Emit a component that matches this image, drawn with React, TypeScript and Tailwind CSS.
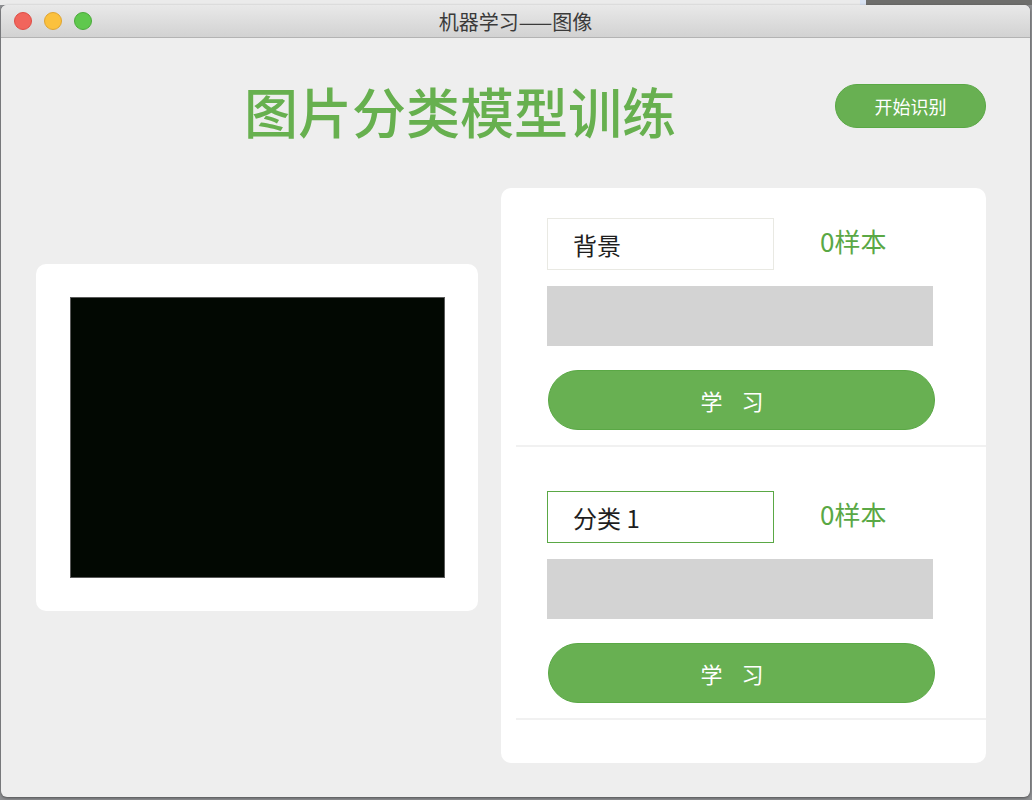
import React from 'react'

const cjk = { fontFamily: '"Noto Sans CJK SC", "Noto Sans", sans-serif' }

interface ClassRowProps {
  name: string
  count: number
  active?: boolean
  first?: boolean
}

const ClassRow: React.FC<ClassRowProps> = ({ name, count, active, first }) => {
  return (
    <div className="flex flex-col">
      <div className={`${first ? 'pt-[30px]' : 'pt-[44px]'} pl-[46px] pb-[15px] flex flex-col`}>
        {/* name + samples */}
        <div className="flex items-center h-[52px]">
          <input
            defaultValue={name}
            className={`w-[227px] h-[52px] pl-[25px] text-[24px] text-[#1e1e1e] bg-white outline-none border ${
              active ? 'border-[#5aa845]' : 'border-[#e9e9e3]'
            }`}
          />
          <span className="ml-[46px] text-[26px] text-[#5aa845] leading-none -mt-[6px]">{count}样本</span>
        </div>

        {/* sample strip */}
        <div className="mt-[16px] w-[386px] h-[60px] bg-[#d3d3d3]" />

        {/* learn button */}
        <button className="mt-[24px] ml-[1px] w-[387px] h-[60px] rounded-full bg-[#68b052] border border-[#5aa845] text-white text-[22px] tracking-[19px]">
          学习
        </button>
      </div>
      <div className="ml-[15px] h-[2px] bg-[#f1f1f1]" />
    </div>
  )
}

export default function App() {
  return (
    <div className="w-[1032px] h-[800px] flex flex-col bg-[#8e8f92] overflow-hidden" style={cjk}>
      {/* desktop strip behind the window */}
      <div className="h-[5px] flex">
        <div className="flex-1 bg-[#ebebeb]" />
        <div className="w-[6px] bg-[#d8e2f2]" />
        <div className="w-[166px] bg-[#6e6e6c]" />
      </div>

      {/* window */}
      <div className="mx-[1px] w-[1029px] h-[792px] flex flex-col rounded-[6px] overflow-hidden bg-[#eeeeee] shadow-[0_1px_3px_rgba(0,0,0,0.45)]">
        {/* title bar */}
        <div className="h-[33px] flex items-center bg-gradient-to-b from-[#e9e9e9] to-[#d2d2d2] border-b border-[#b3b3b3]">
          <div className="flex items-center gap-[12px] pl-[13px] w-[200px]">
            <span className="w-[18px] h-[18px] rounded-full bg-[#f1655c] border border-[#de4d45]" />
            <span className="w-[18px] h-[18px] rounded-full bg-[#fbc13d] border border-[#dfa431]" />
            <span className="w-[18px] h-[18px] rounded-full bg-[#5fc84d] border border-[#4aaa3a]" />
          </div>
          <div className="flex-1 text-center text-[20px] text-[#3a3a3a] -ml-[186px] mt-[1px]">机器学习——图像</div>
          <div className="w-[14px]" />
        </div>

        {/* content */}
        <div className="flex-1 flex flex-col">
          {/* header */}
          <div className="flex items-start h-[90px]">
            <h1 className="ml-[159px] w-[600px] mt-[46px] text-center text-[54px] leading-[54px] font-medium text-[#67b04f]">
              图片分类模型训练
            </h1>
            <button className="ml-[75px] mt-[46px] w-[151px] h-[44px] rounded-full bg-[#68b052] border border-[#5aa845] text-white text-[18px]">
              开始识别
            </button>
          </div>

          {/* main */}
          <div className="flex items-start mt-[60px]">
            {/* camera */}
            <div className="ml-[35px] mt-[76px] w-[442px] h-[347px] bg-white rounded-[10px] pl-[34px] pr-[33px] py-[33px]">
              <div className="w-[375px] h-[281px] bg-[#020802] border border-[#5a5a5a]" />
            </div>

            {/* classes */}
            <div className="ml-[23px] w-[485px] h-[575px] bg-white rounded-[10px] flex flex-col">
              <ClassRow name="背景" count={0} first />
              <ClassRow name="分类 1" count={0} active />
            </div>
          </div>
        </div>
      </div>
    </div>
  )
}
